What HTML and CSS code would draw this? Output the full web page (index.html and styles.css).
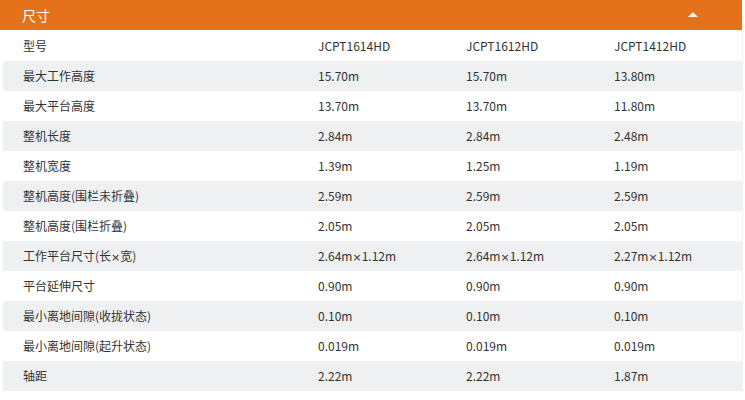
FILE: index.html
```html
<!DOCTYPE html>
<html lang="zh">
<head>
<meta charset="utf-8">
<link rel="stylesheet" href="styles.css">
</head>
<body>
<div class="panel">
  <div class="panel-head">
    <span class="panel-title">尺寸</span>
    <span class="caret"></span>
  </div>
  <table class="spec">
    <colgroup><col class="c-label"><col class="c-val"><col class="c-val"><col class="c-val"></colgroup>
    <tr><td>型号</td><td>JCPT1614HD</td><td>JCPT1612HD</td><td>JCPT1412HD</td></tr>
    <tr><td>最大工作高度</td><td>15.70m</td><td>15.70m</td><td>13.80m</td></tr>
    <tr><td>最大平台高度</td><td>13.70m</td><td>13.70m</td><td>11.80m</td></tr>
    <tr><td>整机长度</td><td>2.84m</td><td>2.84m</td><td>2.48m</td></tr>
    <tr><td>整机宽度</td><td>1.39m</td><td>1.25m</td><td>1.19m</td></tr>
    <tr><td>整机高度(围栏未折叠)</td><td>2.59m</td><td>2.59m</td><td>2.59m</td></tr>
    <tr><td>整机高度(围栏折叠)</td><td>2.05m</td><td>2.05m</td><td>2.05m</td></tr>
    <tr><td>工作平台尺寸(长<span class="times">×</span>宽)</td><td>2.64m<span class="times">×</span>1.12m</td><td>2.64m<span class="times">×</span>1.12m</td><td>2.27m<span class="times">×</span>1.12m</td></tr>
    <tr><td>平台延伸尺寸</td><td>0.90m</td><td>0.90m</td><td>0.90m</td></tr>
    <tr><td>最小离地间隙(收拢状态)</td><td>0.10m</td><td>0.10m</td><td>0.10m</td></tr>
    <tr><td>最小离地间隙(起升状态)</td><td>0.019m</td><td>0.019m</td><td>0.019m</td></tr>
    <tr><td>轴距</td><td>2.22m</td><td>2.22m</td><td>1.87m</td></tr>
  </table>
</div>
</body>
</html>
```
FILE: styles.css
```css
html, body {
  margin: 0;
  padding: 0;
  background: #ffffff;
}
body {
  font-family: "Noto Sans CJK SC", "Noto Sans", sans-serif;
  color: #333333;
}
.panel {
  width: 742px;
}
.panel-head {
  height: 30px;
  background: #e3721b;
  display: flex;
  align-items: center;
  justify-content: space-between;
  padding: 0 44px 0 22px;
  margin-bottom: 1px;
}
.panel-title {
  color: #ffffff;
  font-size: 14px;
  line-height: 30px;
}
.caret {
  width: 0;
  height: 0;
  border-left: 5px solid transparent;
  border-right: 5px solid transparent;
  border-bottom: 5px solid #fff8f0;
  margin-top: -2px;
}
.spec {
  margin-left: 3px;
  width: 739px;
  border-collapse: collapse;
  table-layout: fixed;
  border-right: 1px solid #f0f1f3;
  font-size: 12px;
}
.c-label { width: 295px; }
.c-val { width: 148px; }
.spec td {
  height: 30px;
  padding: 0 0 0 20px;
  line-height: 30px;
  white-space: nowrap;
  vertical-align: middle;
}
.spec tr:nth-child(even) td {
  background: #eef0f2;
}
.times {
  font-family: "DejaVu Sans", "Liberation Sans", sans-serif;
  font-size: 11px;
  line-height: 1;
}
```
